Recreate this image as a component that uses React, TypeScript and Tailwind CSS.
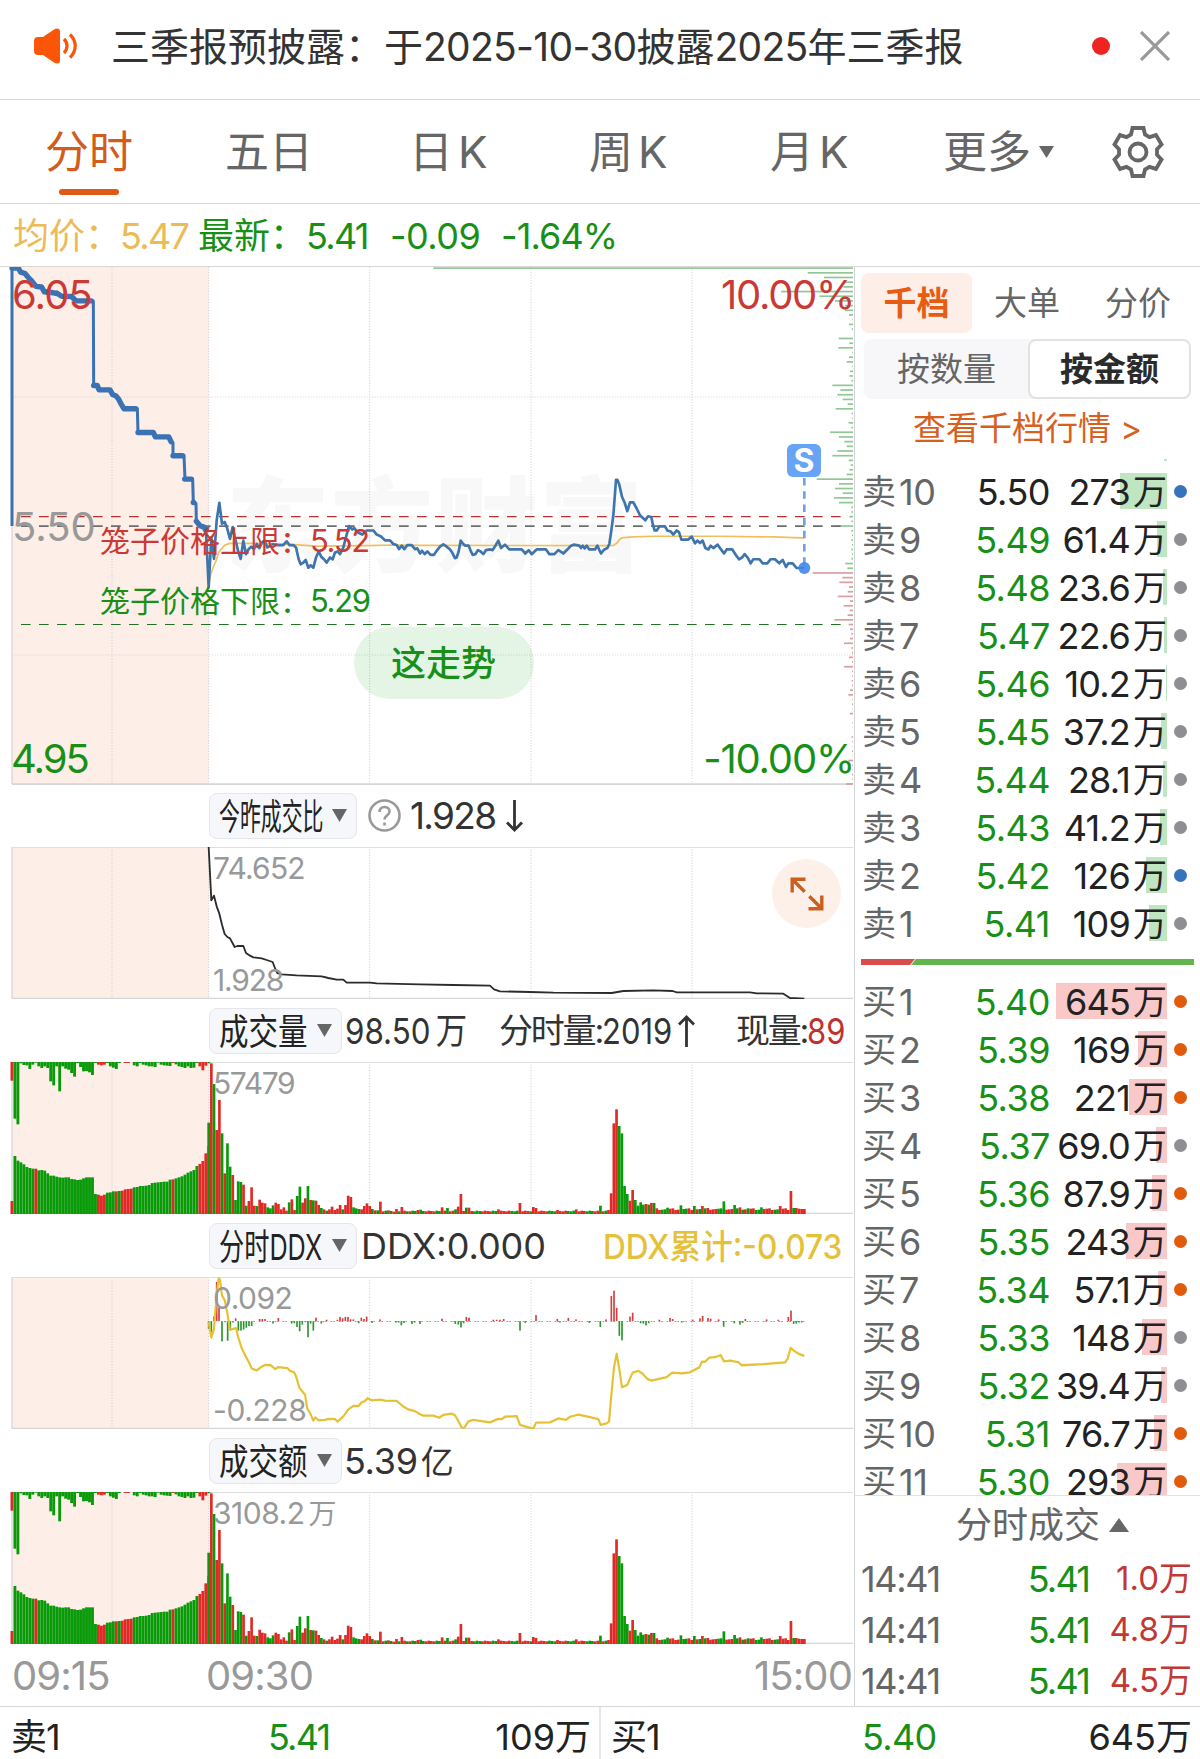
import { Fragment } from "react";
import type { ReactNode } from "react";
import clsx from "clsx";

type Level = { name: string; price: string; amount: string; bar: number; dot: "blue" | "gray" | "orange" };

const asks: Level[] = [
  { name: "10", price: "5.50", amount: "273", bar: 47, dot: "blue" },
  { name: "9", price: "5.49", amount: "61.4", bar: 10, dot: "gray" },
  { name: "8", price: "5.48", amount: "23.6", bar: 4, dot: "gray" },
  { name: "7", price: "5.47", amount: "22.6", bar: 3, dot: "gray" },
  { name: "6", price: "5.46", amount: "10.2", bar: 1, dot: "gray" },
  { name: "5", price: "5.45", amount: "37.2", bar: 6, dot: "gray" },
  { name: "4", price: "5.44", amount: "28.1", bar: 4, dot: "gray" },
  { name: "3", price: "5.43", amount: "41.2", bar: 7, dot: "gray" },
  { name: "2", price: "5.42", amount: "126", bar: 21, dot: "blue" },
  { name: "1", price: "5.41", amount: "109", bar: 18, dot: "gray" },
];

const bids: Level[] = [
  { name: "1", price: "5.40", amount: "645", bar: 111, dot: "orange" },
  { name: "2", price: "5.39", amount: "169", bar: 29, dot: "orange" },
  { name: "3", price: "5.38", amount: "221", bar: 38, dot: "orange" },
  { name: "4", price: "5.37", amount: "69.0", bar: 11, dot: "gray" },
  { name: "5", price: "5.36", amount: "87.9", bar: 15, dot: "orange" },
  { name: "6", price: "5.35", amount: "243", bar: 41, dot: "orange" },
  { name: "7", price: "5.34", amount: "57.1", bar: 9, dot: "orange" },
  { name: "8", price: "5.33", amount: "148", bar: 25, dot: "gray" },
  { name: "9", price: "5.32", amount: "39.4", bar: 6, dot: "gray" },
  { name: "10", price: "5.31", amount: "76.7", bar: 13, dot: "orange" },
  { name: "11", price: "5.30", amount: "293", bar: 50, dot: "orange" },
];

const trades = [
  { time: "14:41", price: "5.41", amount: "1.0万" },
  { time: "14:41", price: "5.41", amount: "4.8万" },
  { time: "14:41", price: "5.41", amount: "4.5万" },
];

// Chart coordinates are in thirds of a pixel horizontally.
const GRID_X = [336, 626, 1109, 1593, 2076];
const STEP = 8.05;
const OPEN_X = 626;

const auctionLine =
  "36,787 36,24 55,24 62,36 75,40 85,52 95,62 108,78 125,80 133,94 160,97 172,95 185,107 215,108 228,121 280,121 281,371 292,371 297,384 330,384 338,398 348,402 356,412 364,427 372,440 412,440 414,510 460,510 466,523 506,523 513,537 519,540 519,579 552,579 555,648 578,648 580,717 588,720 589,773 600,786 612,790 618,800";

const auctionDots = [
  "36,24 55,24 62,36 75,40 85,52 95,62 108,78 125,80 133,94 160,97 172,99 185,107 215,108 228,121 274,121",
  "281,371 292,371 297,384 330,384 338,398 348,402 356,412 364,427 372,440 407,440",
  "414,510 460,510 466,523 506,523 513,537",
  "519,579 548,579",
  "554,648 574,648",
  "580,717 581,717",
  "589,773 600,786 612,790 618,800",
];

const priceLine =
  "618,800 626,968 634,820 642,884 650,770 658,718 666,780 674,775 682,795 690,825 698,790 706,825 714,860 722,884 730,830 738,870 746,855 754,848 762,855 770,840 778,852 786,835 794,830 802,850 810,846 818,840 830,843 850,843 860,832 868,843 880,843 888,850 896,885 902,900 910,895 917,887 925,910 932,903 940,910 948,880 956,862 964,878 972,885 980,895 990,880 998,885 1005,865 1013,862 1020,870 1030,850 1040,812 1047,787 1057,797 1063,793 1072,805 1087,812 1100,800 1120,800 1130,812 1142,817 1155,829 1170,829 1180,840 1190,843 1197,855 1205,845 1213,855 1222,843 1235,843 1245,855 1252,853 1260,868 1266,860 1274,870 1282,862 1292,872 1302,872 1310,860 1320,848 1330,841 1340,848 1350,856 1357,866 1365,882 1370,880 1376,862 1382,830 1390,840 1396,845 1406,845 1412,860 1418,872 1426,870 1434,858 1442,862 1450,870 1458,858 1470,856 1478,858 1488,842 1495,830 1503,852 1515,842 1528,856 1565,856 1576,868 1586,858 1595,870 1610,856 1638,856 1648,870 1663,870 1675,858 1690,868 1702,856 1712,846 1721,842 1738,845 1743,852 1748,845 1754,853 1760,845 1768,856 1785,856 1792,845 1803,868 1812,857 1822,852 1828,840 1834,800 1840,755 1845,690 1848,650 1852,650 1858,665 1866,700 1874,718 1882,743 1890,717 1900,717 1910,735 1920,755 1936,770 1944,758 1954,760 1958,780 1964,800 1970,800 1978,788 1995,788 2002,800 2012,803 2020,812 2030,800 2037,805 2044,827 2065,827 2075,818 2085,838 2092,830 2100,837 2108,830 2116,852 2125,856 2132,845 2140,852 2153,842 2163,856 2172,868 2180,856 2197,856 2207,872 2217,885 2226,880 2234,870 2243,880 2252,897 2260,885 2278,885 2288,897 2302,897 2312,885 2325,885 2338,897 2348,887 2358,908 2365,897 2378,897 2390,911 2413,911";

const averageLine =
  "626,965 632,930 640,908 648,890 656,865 664,855 675,843 690,838 760,838 880,842 950,846 1100,845 1180,843 1260,844 1820,845 1840,844 1850,838 1858,828 1865,822 1900,819 1960,817 2160,817 2320,819 2380,821 2413,822";

const ratioLine =
  "626,202 634,362 638,355 642,348 650,380 658,402 666,435 674,463 682,472 690,476 704,502 712,499 730,499 738,520 750,528 760,533 785,536 800,541 818,547 826,568 832,580 845,584 890,587 965,590 985,595 1010,600 1030,600 1040,609 1110,609 1130,611 1260,614 1360,616 1470,618 1482,629 1500,635 1590,637 1660,639 1835,640 1870,634 1960,632 2018,634 2030,638 2250,638 2270,641 2350,642 2370,655 2413,657";

const ddxLine =
  "626,320 634,365 642,340 650,240 656,196 660,200 666,245 674,258 682,295 690,342 700,340 708,338 715,365 725,395 735,415 745,432 755,453 770,459 785,448 795,443 812,444 826,455 835,449 862,452 870,460 882,464 888,475 898,508 915,528 922,568 930,580 940,602 946,593 955,601 975,600 985,597 1005,598 1013,605 1030,590 1045,570 1060,560 1075,561 1085,550 1095,546 1103,538 1115,544 1140,542 1155,545 1190,546 1210,562 1225,570 1245,575 1260,584 1270,588 1300,588 1318,594 1330,586 1355,582 1365,587 1375,603 1385,622 1393,622 1405,604 1420,600 1470,607 1495,597 1505,598 1515,591 1550,589 1560,614 1580,620 1600,625 1608,608 1650,607 1675,596 1698,600 1710,591 1735,585 1760,590 1795,598 1802,614 1820,610 1827,605 1833,540 1842,450 1850,411 1858,455 1866,507 1882,500 1890,482 1898,465 1915,460 1928,468 1942,483 1955,488 2000,478 2017,465 2045,467 2070,464 2098,450 2106,434 2115,434 2128,422 2145,421 2162,415 2172,433 2190,431 2215,435 2225,444 2290,441 2355,436 2363,425 2372,394 2385,405 2400,413 2413,417";

// Volume per minute from 09:30; positive is an up bar, negative a down bar.
const minuteBars = [
  -274, 452, -390, 252, 342, -242, 122, -212, -142, 117, -42, -98, -96, 88, -25, 39, 80, 25, -24, 43,
  34, 32, -20, -17, -26, 34, 30, 14, 20, 10, -35, 44, 12, -54, -82, 34, 47, -84, 42, -41,
  40, 27, -18, 14, -10, 14, 22, 12, 16, 27, -14, 27, 55, 51, -20, -17, -15, 14, 24, 32,
  24, -15, 11, -11, 37, 8, -10, 11, -9, 7, 15, -8, 21, 10, -8, 8, -10, -9, 12, -13,
];
for (let i = minuteBars.length; i < 223; i++) {
  const late = i > 165;
  const h = late ? 12 + ((i * 7) % 6) : 8 + ((i * 5) % 3);
  minuteBars.push((i * 13) % 7 < 4 ? h : -h);
}
const spikes: Record<number, number> = {
  87: 20, 89: -18, 92: -14, 93: 22, 94: 60, 96: -19, 97: 19, 108: 14, 116: 33, 121: 21, 122: 18, 130: 12,
  137: 14, 146: -25, 149: 12, 150: 62, 151: 272, 152: 314, 153: -264, 154: -242, 155: -84, 156: -60, 157: 40,
  158: 72, 159: -42, 160: -25, 161: -35, 162: -28, 163: 30, 164: -28, 165: 33, 166: -33, 171: -19, 176: -26,
  181: -24, 184: 24, 186: 18, 192: -38, 196: -27, 198: 20, 201: -17, 206: -20, 213: 24, 217: 69, 218: -18,
  219: 18, 220: 16, 221: 15, 222: 15,
};
Object.entries(spikes).forEach(([i, v]) => (minuteBars[Number(i)] = v));

// Call auction bars: matched volume from the bottom, unmatched from the top.
const matched = [
  39, -174, -160, -155, -149, -141, -138, -136, 136, -131, -132, -130, -122, -115, -115, -112, -110, -109,
  -110, -110, -105, -104, -102, -103, -107, -110, -110, -110, -60, 58, 55, 58, -64, -65, -68, 68, -69, 70, 74,
  75, 76, -80, -81, -84, -84, -85, -87, -93, -94, -95, -96, -97, -97, -103, 104, -107, -110, -113, -118, -124,
  -128, -132, -144, 150, 159, 182, -204,
];
const unmatched = [
  56, -170, -187, -4, -9, -10, -21, -8, -2, -13, -18, -13, -18, -58, -70, -13, -88, -13, -20, -23, -33, -44,
  -3, -15, -28, -27, -31, -39, -3, 8, 10, 8, -3, -13, -17, -21, -3, 0, 3, 3, 0, -10, -13, -3, -8, -10, -13,
  -13, -15, -2, -8, -10, -11, -12, 3, -7, -13, -15, -18, -13, -18, -17, -3, 13, 25, 11, -4,
];

const ddxBars: [number, number][] = [
  [626, 22], [634, 32], [642, -13], [650, -112], [657, -38], [666, 58], [675, 3], [683, 56], [691, 27], [699, 4],
  [707, -8], [715, 27], [723, 27], [731, 24], [739, 19], [747, 14], [755, 14], [779, -6], [787, -6], [795, -6],
  [819, 7], [835, -9], [875, 7], [883, 6], [891, 17], [899, 29], [907, 10], [916, 3], [924, 46], [932, 7],
  [940, 27], [948, -10], [964, 7], [980, -4], [1012, -4], [1020, -12], [1028, -8], [1036, -12], [1044, -12],
  [1052, -5], [1060, -5], [1076, 6], [1084, -10], [1092, -6], [1100, -13], [1116, 5], [1140, -5], [1188, 4],
  [1196, 4], [1204, 12], [1212, 5], [1236, 8], [1244, 4], [1260, 8], [1326, -7], [1366, 8], [1375, 10],
  [1383, 18], [1391, 6], [1399, -12], [1407, -10], [1480, -4], [1490, -4], [1500, -4], [1511, -6], [1560, 27],
  [1576, 5], [1608, -17], [1672, -6], [1680, 4], [1705, -9], [1728, -5], [1768, 5], [1801, 17], [1818, -5],
  [1834, -72], [1842, -87], [1850, -38], [1858, 42], [1866, 55], [1890, -13], [1898, -24], [1922, 6], [1930, 7],
  [1938, 12], [1946, 6], [1978, -4], [2010, -9], [2018, -6], [2045, 4], [2078, -4], [2100, -8], [2108, -15],
  [2124, -9], [2132, -7], [2156, -5], [2171, 16], [2203, 6], [2220, 10], [2228, 5], [2236, -6], [2300, -5],
  [2335, -4], [2365, -12], [2373, -30], [2381, 8], [2389, 7], [2397, 4], [2405, 4],
];

// Resting orders by price, one entry per cent from 6.05 downwards.
const depth = [
  1259, 136, 87, 29, 29, 216, 101, 54, 24, 24, 12, 2, 12, 4, 0, 43, 11, 44, 2, 12, 19, 2, 9, 11, 5, 62, 38, 47,
  31, 16, 52, 4, 2, 13, 5, 69, 42, 26, 19, 47, 62, 13, 7, 11, 19, 109, 42, 54, 31, 57, 42, 5, 5, 11, 5, 52, 5,
  3, 5, 3, 5, 3, 5, 23, 17, 121, 32, 41, 12, 16, 46, 9, 28, 9, 16, 56, 13, 9, 5, 9, 27, 5, 3, 12, 3, 27, 3, 2,
  4, 3, 9, 14, 2, 3, 1, 9, 0, 2, 1, 0, 4, 2, 1, 3, 1, 14, 2, 1, 3, 2, 21,
];

const ink = (v: number) => (v > 0 ? "#e02a26" : "#089a08");

function Grid({ top, bottom }: { top: number; bottom: number }) {
  return (
    <g>
      <rect x="36" y={top} width="590" height={bottom - top} fill="#fdeee7" />
      {GRID_X.map((x) => (
        <line key={x} x1={x} x2={x} y1={top} y2={bottom} stroke="#cccccc" strokeWidth="3" strokeDasharray="3 5" />
      ))}
      <line x1="36" x2="36" y1={top} y2={bottom} stroke="#d8d8d8" strokeWidth="4" />
    </g>
  );
}

function PriceChart() {
  return (
    <svg className="block h-[519px] w-[854px]" viewBox="0 20.7 2562 1535" preserveAspectRatio="none">
      <Grid top={20} bottom={1550} />
      {[405, 1168].map((y) => (
        <line key={y} x1="36" x2="2559" y1={y} y2={y} stroke="#d4d4d4" strokeWidth="3" strokeDasharray="3 5" />
      ))}
      <line x1="36" x2="2559" y1="1550" y2="1550" stroke="#d6d6d6" strokeWidth="5" />
      {depth.map((w, i) => (
        <rect
          key={i}
          x={2559 - w}
          y={21.5 + i * 13.87}
          width={w}
          height="5"
          fill={i < 65 ? "#93c695" : "#d99f9f"}
        />
      ))}
      <line x1="63" x2="2525" y1="759" y2="759" stroke="#b93232" strokeWidth="3.500" strokeDasharray="29 25" />
      <line x1="63" x2="2525" y1="787" y2="787" stroke="#6e6e6e" strokeWidth="5" strokeDasharray="29 25" />
      <line x1="63" x2="2525" y1="1078" y2="1078" stroke="#1f721f" strokeWidth="3.500" strokeDasharray="29 25" />
      <polyline points={averageLine} fill="none" stroke="#efbf5e" strokeWidth="5" />
      <polyline points={auctionLine} fill="none" stroke="#3a72b4" strokeWidth="9" strokeLinejoin="round" />
      {auctionDots.map((d) => (
        <polyline
          key={d}
          points={d}
          fill="none"
          stroke="#3a72b4"
          strokeWidth="16"
          strokeLinecap="round"
          strokeLinejoin="round"
        />
      ))}
      <polyline points={priceLine} fill="none" stroke="#3f74ac" strokeWidth="8" strokeLinejoin="round" />
      <line x1="2413" x2="2413" y1="645" y2="905" stroke="#6fa3e0" strokeWidth="8" strokeDasharray="22 17" />
      <circle cx="2413" cy="911" r="18" fill="#4487e8" fillOpacity=".9" />
    </svg>
  );
}

function BarsChart() {
  return (
    <svg className="block h-[152px] w-[854px]" viewBox="0 847 2562 456" preserveAspectRatio="none">
      <Grid top={847} bottom={1302} />
      <line x1="36" x2="2559" y1="848.5" y2="848.5" stroke="#dedede" strokeWidth="3" />
      <line x1="36" x2="2559" y1="1301" y2="1301" stroke="#d6d6d6" strokeWidth="4" />
      {matched.map((v, i) => (
        <Fragment key={i}>
          <rect x={31.5 + i * 8.95} y={1303 - Math.abs(v)} width="8.6" height={Math.abs(v)} fill={ink(v)} />
          <rect x={31.5 + i * 8.95} y="847" width="8.6" height={Math.abs(unmatched[i])} fill={ink(unmatched[i])} />
        </Fragment>
      ))}
      {minuteBars.map((v, i) => (
        <rect
          key={i}
          x={OPEN_X - 4 + i * STEP}
          y={1303 - Math.abs(v)}
          width="8"
          height={Math.abs(v)}
          fill={ink(v)}
        />
      ))}
    </svg>
  );
}

function RatioChart() {
  return (
    <svg className="block h-[152px] w-[854px]" viewBox="0 202 2562 456" preserveAspectRatio="none">
      <Grid top={202} bottom={657} />
      <line x1="36" x2="2559" y1="203.5" y2="203.5" stroke="#dedede" strokeWidth="3" />
      <line x1="36" x2="2559" y1="656" y2="656" stroke="#d6d6d6" strokeWidth="4" />
      <polyline points={ratioLine} fill="none" stroke="#2b2b2b" strokeWidth="5.500" strokeLinejoin="round" />
    </svg>
  );
}

function DdxChart() {
  return (
    <svg className="block h-[152px] w-[854px]" viewBox="0 192 2562 434" preserveAspectRatio="none">
      <Grid top={192} bottom={626} />
      <line x1="36" x2="2559" y1="193.5" y2="193.5" stroke="#dedede" strokeWidth="3" />
      <line x1="36" x2="2559" y1="624.5" y2="624.5" stroke="#d6d6d6" strokeWidth="4" />
      <line x1="760" x2="2413" y1="319" y2="319" stroke="#86a886" strokeWidth="3" strokeDasharray="5 11 5 3" />
      {ddxBars.map(([x, v]) => (
        <rect
          key={x}
          x={x - 2.5}
          y={v < 0 ? 318 + v : 318}
          width="5"
          height={Math.abs(v)}
          fill={v < 0 ? "#d04040" : "#2f962f"}
        />
      ))}
      <polyline points={ddxLine} fill="none" stroke="#e5c235" strokeWidth="6.500" strokeLinejoin="round" />
    </svg>
  );
}

function Label({ className, children }: { className: string; children: ReactNode }) {
  return <span className={clsx("absolute leading-none whitespace-nowrap", className)}>{children}</span>;
}

function Caret({ className }: { className?: string }) {
  return (
    <svg className={clsx("h-[13px] w-[15px] shrink-0", className)} viewBox="0 0 15 13" fill="#666">
      <path d="M0 0h15L7.500 13z" />
    </svg>
  );
}

function Indicator({ name, wide, squeeze, children }: { name: string; wide?: boolean; squeeze: string; children: ReactNode }) {
  return (
    <div className="flex h-[63px] items-center pl-[209px] text-[37px] leading-none text-[#333]">
      <div
        className={clsx(
          "flex h-[46px] shrink-0 items-center justify-between rounded-lg border border-[#e4e6ea] bg-[#f6f7fa] pr-[9px] pl-[9px] text-[#222]",
          wide ? "w-[148px]" : "w-[133px]",
        )}
      >
        <span className={clsx("h-9 whitespace-nowrap", wide ? "w-[106px]" : "w-[92px]")}>
          <span className={clsx("inline-block origin-left text-[36px]", squeeze)}>{name}</span>
        </span>
        <Caret />
      </div>
      {children}
    </div>
  );
}

function Arrow({ up, className }: { up?: boolean; className?: string }) {
  return (
    <svg
      className={clsx("h-8 w-[17px] shrink-0", up && "rotate-180", className)}
      viewBox="0 0 17 32"
      fill="none"
      stroke="#333"
      strokeWidth="2.800"
    >
      <path d="M8.500 0v30M1 22.500l7.500 7.500 7.500-7.500" />
    </svg>
  );
}

function LevelRow({ side, level }: { side: "卖" | "买"; level: Level }) {
  return (
    <div className="flex h-12 shrink-0 items-center text-[36px] leading-none">
      <div className="flex w-[92px] items-center gap-[3px] pt-0.5 text-[#666]">
        <span className="text-[34px]">{side}</span>
        <span className="tracking-[-0.3px]">{level.name}</span>
      </div>
      <div
        className={clsx(
          "w-[96px] pt-0.5 text-right tracking-[-0.5px]",
          level.price === "5.50" ? "text-[#222]" : "text-[#189018]",
        )}
      >
        {level.price}
      </div>
      <div className="relative ml-[3px] flex h-9 w-[114px] items-center justify-end gap-[3px] pt-0.5 text-[#222]">
        <div
          className={clsx("absolute inset-y-0 right-0", side === "卖" ? "bg-[#bfe5c1]" : "bg-[#f9c9c9]")}
          style={{ width: level.bar }}
        />
        <span className="relative tracking-[-0.8px]">{level.amount}</span>
        <span className="relative text-[34px]">万</span>
      </div>
      <div
        className={clsx(
          "ml-[7px] size-[13px] rounded-full",
          level.dot === "blue" && "bg-[#3573bd]",
          level.dot === "gray" && "bg-[#8e8e93]",
          level.dot === "orange" && "bg-[#e35a0c]",
        )}
      />
    </div>
  );
}

function Notice() {
  return (
    <div className="flex h-[100px] items-center border-b border-[#d8d8d8] pb-[7px] pl-[34px]">
      <svg className="h-9 w-11 shrink-0" viewBox="0 0 44 36" fill="none">
        <path
          d="M4 9h5L20 1.500c3-2 6-1 6 2v29c0 3-3 4-6 2L9 27H4c-2.500 0-4-1.500-4-4V13c0-2.500 1.500-4 4-4z"
          fill="#fb5607"
        />
        <path d="M30 11c4 4 4 10 0 14M36 6.500c7 7 7 16 0 23" stroke="#fb5607" strokeWidth="3.200" />
      </svg>
      <span className="ml-[33px] text-[39px] leading-none whitespace-nowrap text-[#333]">
        三季报预披露：于<span className="tracking-[-0.7px]">2025-10-30</span>披露
        <span className="tracking-[-0.7px]">2025</span>年三季报
      </span>
      <span className="ml-auto size-[18px] rounded-full bg-[#f02323]" />
      <svg className="mr-[30px] ml-[30px] size-[30px]" viewBox="0 0 30 30" stroke="#999" strokeWidth="3.200">
        <path d="M1 1l28 28M29 1L1 29" />
      </svg>
    </div>
  );
}

function PeriodTabs() {
  return (
    <div className="flex h-[104px] items-center border-b border-[#d8d8d8] pl-[45px] text-[44px] leading-none whitespace-nowrap text-[#666]">
      <div className="relative w-[180px] text-[#d25c1b]">
        分时
        <span className="absolute top-[59px] left-3.5 h-1.5 w-[60px] rounded-full bg-[#de5a15]" />
      </div>
      <div className="w-[184px]">五日</div>
      <div className="w-[180px]">
        日<span className="ml-[5px]">K</span>
      </div>
      <div className="w-[181px]">
        周<span className="ml-[5px]">K</span>
      </div>
      <div className="w-[173px]">
        月<span className="ml-[5px]">K</span>
      </div>
      <div className="flex items-center">
        更多
        <svg className="ml-2 h-3 w-[15px]" viewBox="0 0 15 12" fill="#666">
          <path d="M0 0h15L7.500 12z" />
        </svg>
      </div>
      <svg
        className="ml-[58px] h-[52px] w-[52px]"
        viewBox="0 0 52 52"
        fill="none"
        stroke="#666"
        strokeWidth="3.800"
      >
        <path d="M20.500 2h11l1.500 6.500 4.500 2.600 6.500-2 5.500 9.400-4.500 4.700v5.600l4.500 4.700-5.500 9.400-6.500-2-4.500 2.600-1.500 6.500h-11L19 43.500l-4.500-2.600-6.500 2-5.500-9.400L7 28.800v-5.600l-4.500-4.700L8 9.100l6.500 2L19 8.500z" />
        <circle cx="26" cy="26" r="8.500" />
      </svg>
    </div>
  );
}

function Quote() {
  return (
    <div className="flex h-[63px] items-center border-b border-[#d8d8d8] pt-0.5 pl-[13px] text-[36px] leading-none whitespace-nowrap text-[#189018]">
      <div className="w-[107px] text-[#ebbb55]">均价：</div>
      <div className="w-[78px] tracking-[-1.7px] text-[#ebbb55]">5.47</div>
      <div className="w-[108px]">最新：</div>
      <div className="w-[84px] tracking-[-1.7px]">5.41</div>
      <div className="w-[111px] tracking-[-0.5px]">-0.09</div>
      <div className="tracking-[-0.9px]">-1.64%</div>
    </div>
  );
}

function Charts() {
  return (
    <div className="w-[855px] shrink-0 border-r border-[#d2d5d5]">
      <div className="relative h-[517px]">
        <Label className="top-[208px] left-[226px] text-[103px] font-black tracking-[1.5px] text-[#f8f8f8]">
          东方财富
        </Label>
        <div className="absolute inset-0">
          <PriceChart />
        </div>
        <Label className="top-[8px] left-3 text-[40px] tracking-[-0.9px] text-[#c93a36]">6.05</Label>
        <Label className="top-[240px] left-3 text-[40px] text-[#999]">5.50</Label>
        <Label className="top-[472px] left-[11px] text-[40px] tracking-[-2px] text-[#189018]">4.95</Label>
        <Label className="top-[8px] right-0 text-[40px] tracking-[-1.3px] text-[#c93a36]">10.00%</Label>
        <Label className="top-[472px] right-0 text-[40px] tracking-[-1.2px] text-[#189018]">-10.00%</Label>
        <Label className="top-[258px] left-[100px] text-[30px] text-[#c93a36]">
          笼子价格上限：<span className="text-[31px] tracking-[-1.4px]">5.52</span>
        </Label>
        <Label className="top-[318px] left-[100px] text-[30px] text-[#189018]">
          笼子价格下限：<span className="text-[31px] tracking-[-1.4px]">5.29</span>
        </Label>
        <div className="absolute top-[360px] left-[354px] flex h-[72px] w-[180px] items-center justify-center rounded-full bg-[#20ad35]/12 pr-px text-[35px] leading-none font-medium text-[#189018]">
          这走势
        </div>
        <div className="absolute top-[177px] left-[787px] flex h-[33px] w-[34px] items-center justify-center rounded-md bg-[#68a4f5] text-[32px] leading-none font-bold text-white">
          S
        </div>
      </div>

      <Indicator name="今昨成交比" wide squeeze="scale-x-[0.58]">
        <svg className="ml-[11px] size-[33px] shrink-0" viewBox="0 0 33 33" fill="none" stroke="#999" strokeWidth="2.600">
          <circle cx="16.500" cy="16.500" r="15" />
          <path d="M11.500 13c0-3 2-5 5-5s5 2 5 4.500c0 4-5 4-5 8" />
          <path d="M16.500 23.500v3" />
        </svg>
        <span className="ml-[9px] tracking-[-1.7px]">1.928</span>
        <Arrow className="ml-[11px]" />
      </Indicator>
      <div className="relative">
        <RatioChart />
        <Label className="top-[6px] left-[213px] text-[30px] tracking-[-0.8px] text-[#999]">74.652</Label>
        <Label className="top-[118px] left-[213px] text-[30px] tracking-[-1.2px] text-[#999]">1.928</Label>
        <div className="absolute top-[12px] left-[772px] flex size-[69px] items-center justify-center rounded-full bg-[#fdf0e9]">
          <svg className="size-[34px]" viewBox="0 0 34 34" fill="none" stroke="#cc5f1e" strokeWidth="3.400">
            <path d="M15.500 2.200H2.200v13.300M2.200 2.200l12.500 12.500M18.500 31.800h13.300V18.500M31.800 31.800L19.300 19.300" />
          </svg>
        </div>
      </div>

      <Indicator name="成交量" squeeze="scale-x-[0.82]">
        <span className="ml-[3px] w-[154px] whitespace-nowrap">
          <span className="inline-block origin-left scale-x-[0.87] text-[36px]">
            98.50<span className="ml-1.5">万</span>
          </span>
        </span>
        <span className="flex w-[237px] items-center whitespace-nowrap">
          <span className="text-[34px] tracking-[-2.2px]">分时量:</span>
          <span className="w-[72px]">
            <span className="inline-block origin-left scale-x-[0.86] text-[36px]">2019</span>
          </span>
          <Arrow up className="ml-1" />
        </span>
        <span className="text-[34px] tracking-[-2.2px] whitespace-nowrap">现量:</span>
        <span className="w-10 text-[#c0302f]">
          <span className="inline-block origin-left scale-x-[0.86] text-[36px]">89</span>
        </span>
      </Indicator>
      <div className="relative">
        <BarsChart />
        <Label className="top-[6px] left-[213px] text-[30px] tracking-[-1.4px] text-[#999]">57479</Label>
      </div>

      <Indicator name="分时DDX" wide squeeze="scale-x-[0.7]">
        <span className="ml-1 w-[242px] shrink-0 text-[36px]">DDX:0.000</span>
        <span className="w-[245px] shrink-0 whitespace-nowrap text-[#e5c03a]">
          <span className="inline-block origin-left scale-x-[0.93] text-[34px] font-medium">DDX累计:-0.073</span>
        </span>
      </Indicator>
      <div className="relative">
        <DdxChart />
        <Label className="top-[6px] left-[213px] text-[30px] tracking-[-0.5px] text-[#999]">0.092</Label>
        <Label className="top-[118px] left-[213px] text-[30px] tracking-[-0.4px] text-[#999]">-0.228</Label>
      </div>

      <Indicator name="成交额" squeeze="scale-x-[0.82]">
        <span className="ml-[2px] text-[36px] tracking-[-0.3px] whitespace-nowrap">
          5.39<span className="ml-[3px] text-[33px]">亿</span>
        </span>
      </Indicator>
      <div className="relative">
        <BarsChart />
        <Label className="top-[6px] left-[213px] text-[30px] tracking-[-0.5px] text-[#999]">
          3108.2<span className="ml-1 text-[28px]">万</span>
        </Label>
      </div>

      <div className="flex h-[62px] items-center pt-px pr-0.5 pl-3 text-[40px] leading-none tracking-[-0.9px] text-[#999]">
        <span className="w-[194px]">09:15</span>
        <span>09:30</span>
        <span className="ml-auto">15:00</span>
      </div>
    </div>
  );
}

function OrderBook() {
  return (
    <div className="flex min-w-0 flex-1 flex-col">
      <div className="mt-1.5 ml-1.5 flex h-[60px] items-center text-[33px] leading-none text-[#666]">
        <div className="flex h-full w-[111px] items-center justify-center rounded-lg bg-[#fdeee7] font-bold text-[#e85c12]">
          千档
        </div>
        <div className="ml-[22px]">大单</div>
        <div className="ml-[45px]">分价</div>
      </div>
      <div className="mt-1.5 ml-[9px] flex h-[60px] w-[327px] items-center rounded-lg bg-[#f7f7fa] text-[33px] leading-none text-[#666]">
        <div className="w-[164px] pl-px text-center">按数量</div>
        <div className="flex h-full flex-1 items-center justify-center rounded-lg border-2 border-[#e2e2e2] bg-white font-bold text-[#2b2b2b]">
          按金额
        </div>
      </div>
      <div className="mt-[13px] pl-[58px] text-[33px] leading-none text-[#d8601f]">查看千档行情 &gt;</div>
      <div className="mt-[14px] ml-[309px] h-[2px] w-[3px] bg-[#bfe5c1]" />

      <div className="mt-1.5 flex h-[1029px] flex-col overflow-hidden border-b border-[#e2e2e2] pl-[7px]">
        {asks.map((level) => (
          <LevelRow key={level.name} side="卖" level={level} />
        ))}
        <svg className="mt-3 mb-3 -ml-px h-1.5 w-[333px] shrink-0" viewBox="0 0 333 6">
          <path d="M0 0h54l-5 6H0z" fill="#d84c4c" />
          <path d="M55 0h278v6H50z" fill="#62b44d" />
        </svg>
        {bids.map((level) => (
          <LevelRow key={level.name} side="买" level={level} />
        ))}
      </div>

      <div className="flex h-[57px] items-center justify-end pr-[71px] text-[36px] leading-none text-[#666]">
        分时成交
        <svg className="ml-[9px] h-3.5 w-5" viewBox="0 0 20 14" fill="#666">
          <path d="M10 0l10 14H0z" />
        </svg>
      </div>
      {trades.map((trade, i) => (
        <div key={i} className="flex h-[51px] items-center pr-2 pl-1.5 text-[36px] leading-none">
          <span className="w-[130px] tracking-[-1.3px] text-[#666]">{trade.time}</span>
          <span className="w-[98px] text-right tracking-[-1.8px] text-[#189018]">{trade.price}</span>
          <span className="ml-auto text-[33px] text-[#c23835]">{trade.amount}</span>
        </div>
      ))}
    </div>
  );
}

function BestPrices() {
  return (
    <div className="flex h-[53px] border-t border-[#d8d8d8] text-[36px] leading-none text-[#222]">
      <div className="flex w-[601px] items-center border-r-2 border-[#e6e6e6] pt-[7px] pr-2 pl-[11px]">
        <span className="w-[257px] tracking-[-1px]">卖1</span>
        <span className="tracking-[-1.8px] text-[#189018]">5.41</span>
        <span className="ml-auto">109万</span>
      </div>
      <div className="flex flex-1 items-center pt-[7px] pr-2 pl-2.5">
        <span className="w-[251px] tracking-[-1px]">买1</span>
        <span className="tracking-[-0.7px] text-[#189018]">5.40</span>
        <span className="ml-auto">645万</span>
      </div>
    </div>
  );
}

export default function App() {
  return (
    <div className="h-[1759px] w-[1200px] overflow-hidden bg-white font-['Inter','Noto_Sans_CJK_SC',sans-serif]">
      <Notice />
      <PeriodTabs />
      <Quote />
      <div className="flex h-[1439px]">
        <Charts />
        <OrderBook />
      </div>
      <BestPrices />
    </div>
  );
}
